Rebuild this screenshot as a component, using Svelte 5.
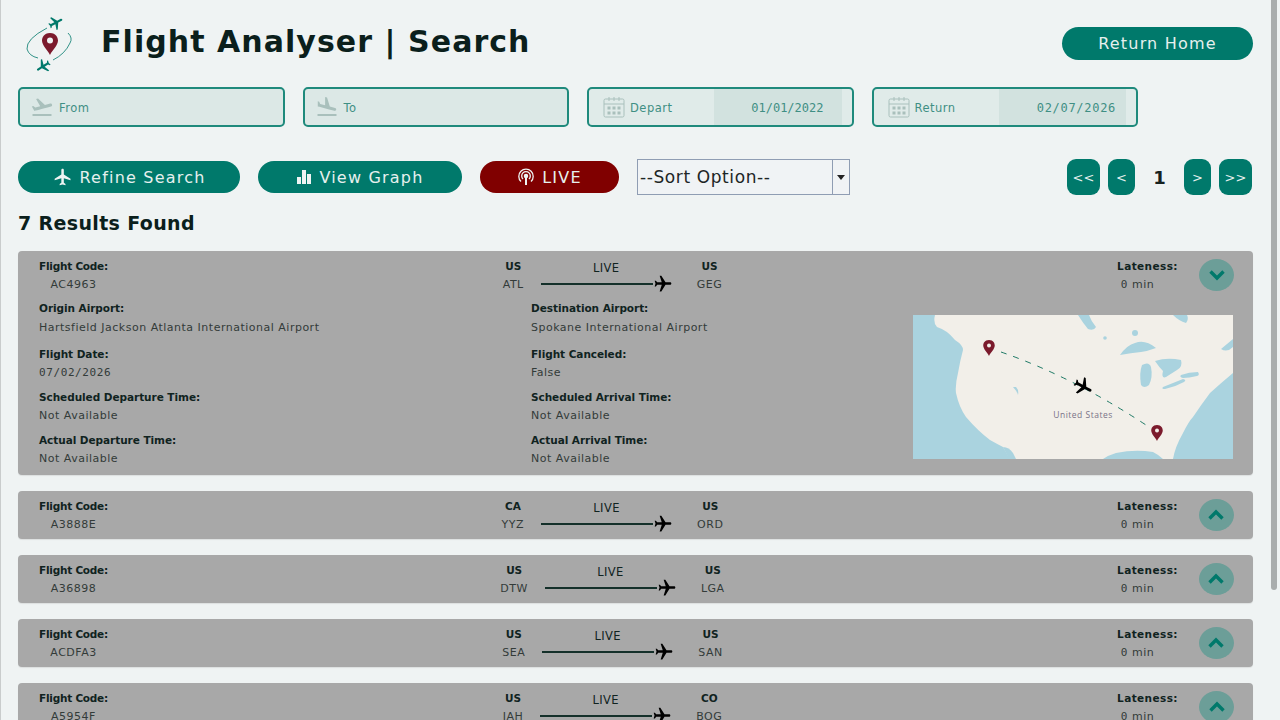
<script>
	const results = [
		{ code: 'AC4963', fromCountry: 'US', from: 'ATL', toCountry: 'US', to: 'GEG' },
		{ code: 'A3888E', fromCountry: 'CA', from: 'YYZ', toCountry: 'US', to: 'ORD' },
		{ code: 'A36898', fromCountry: 'US', from: 'DTW', toCountry: 'US', to: 'LGA' },
		{ code: 'ACDFA3', fromCountry: 'US', from: 'SEA', toCountry: 'US', to: 'SAN' },
		{ code: 'A5954F', fromCountry: 'US', from: 'IAH', toCountry: 'CO', to: 'BOG' },
		{ code: 'A1B2C4', fromCountry: 'US', from: 'JFK', toCountry: 'US', to: 'LAX' },
		{ code: 'AD7710', fromCountry: 'US', from: 'ORD', toCountry: 'US', to: 'DEN' }
	];

	const planePath =
		'M21 16v-2l-8-5V3.5c0-.83-.67-1.5-1.5-1.5S10 2.67 10 3.5V9l-8 5v2l8-2.5V19l-2 1.5V22l3.5-1 3.5 1v-1.5L13 19v-5.5l8 2.5z';

	const pinPath = 'M0 -11C-6.2 -11 -8 -6.2 -8 -3.4C-8 1.5 -2.5 6 0 11C2.5 6 8 1.5 8 -3.4C8 -6.2 6.2 -11 0 -11Z';

	let openIndex = $state(0);

	const leftDetails = [
		{ label: 'Origin Airport:', value: 'Hartsfield Jackson Atlanta International Airport' },
		{ label: 'Flight Date:', value: '07/02/2026', num: true },
		{ label: 'Scheduled Departure Time:', value: 'Not Available' },
		{ label: 'Actual Departure Time:', value: 'Not Available' }
	];
	const rightDetails = [
		{ label: 'Destination Airport:', value: 'Spokane International Airport' },
		{ label: 'Flight Canceled:', value: 'False' },
		{ label: 'Scheduled Arrival Time:', value: 'Not Available' },
		{ label: 'Actual Arrival Time:', value: 'Not Available' }
	];
</script>

{#snippet calendar()}
	<svg class="field-icon" width="22" height="22" viewBox="0 0 22 22" aria-hidden="true">
		<rect x="1" y="3" width="20" height="18" rx="1.5" fill="none" stroke="#a9c0bc" stroke-width="1" />
		<path d="M1 8h20M6 1v4M16 1v4M11 1v4" stroke="#a9c0bc" stroke-width="1" fill="none" />
		<g fill="#a9c0bc">
			<rect x="4.5" y="10.5" width="3" height="3" /><rect x="9.5" y="10.5" width="3" height="3" /><rect x="14.5" y="10.5" width="3" height="3" />
			<rect x="4.5" y="15.5" width="3" height="3" /><rect x="9.5" y="15.5" width="3" height="3" /><rect x="14.5" y="15.5" width="3" height="3" />
		</g>
	</svg>
{/snippet}

{#snippet group(item)}
	<div class="group">
		<div class="label">{item.label}</div>
		<div class="value" class:num={item.num}>{item.value}</div>
	</div>
{/snippet}

<div class="page">
	<header class="header">
		<svg class="logo" width="60" height="64" viewBox="0 0 60 64" aria-hidden="true">
			<path d="M27 16Q6 27 7 37Q9 44 18 46" fill="none" stroke="#00796b" stroke-width=".8" />
			<path d="M48 21Q53 26 50 31Q45 42 33 48" fill="none" stroke="#00796b" stroke-width=".8" />
			<g transform="translate(36 11) rotate(62) scale(.72) translate(-12 -12)"><path d={planePath} fill="#00796b" /></g>
			<g transform="translate(23 54) rotate(238) scale(.72) translate(-12 -12)"><path d={planePath} fill="#00796b" /></g>
			<path transform="translate(30 32)" d={pinPath} fill="#7b1a2c" />
			<circle cx="30" cy="28.5" r="3" fill="#eff3f3" />
		</svg>
		<h1>Flight Analyser | Search</h1>
		<button class="btn home" type="button">Return Home</button>
	</header>

	<div class="fields">
		<div class="field">
			<svg class="field-icon" width="24" height="24" viewBox="0 0 24 24" aria-hidden="true"><path fill="#a9c0bc" d="M2.5 19h19v2h-19v-2zm19.57-9.36c-.21-.8-1.04-1.28-1.84-1.06L14.92 10l-6.9-6.43-1.93.51 4.14 7.17-4.97 1.33-1.97-1.54-1.45.39 2.59 4.49s7.12-1.9 16.57-4.43c.81-.23 1.28-1.05 1.07-1.85z" /></svg>
			<span class="field-name">From</span>
		</div>
		<div class="field">
			<svg class="field-icon" width="24" height="24" viewBox="0 0 24 24" aria-hidden="true"><path fill="#a9c0bc" d="M2.5 19h19v2h-19v-2zm7.18-5.73l4.35 1.16 5.31 1.42c.8.21 1.62-.26 1.84-1.06.21-.8-.26-1.62-1.06-1.84l-5.31-1.42-2.76-9.02L10.12 2v8.28L5.15 8.95l-.93-2.32-1.45-.39v5.17l1.6.43 5.31 1.43z" /></svg>
			<span class="field-name">To</span>
		</div>
		<div class="field date">
			{@render calendar()}
			<span class="field-name">Depart</span>
			<span class="date-value num">01/01/2022</span>
		</div>
		<div class="field date">
			{@render calendar()}
			<span class="field-name">Return</span>
			<span class="date-value num spaced">02/07/2026</span>
		</div>
	</div>

	<div class="toolbar">
		<button class="btn refine" type="button">
			<svg width="20" height="20" viewBox="0 0 24 24" aria-hidden="true"><path fill="#eef4f3" d={planePath} /></svg>
			Refine Search
		</button>
		<button class="btn graph" type="button">
			<svg width="16" height="16" viewBox="0 0 16 16" aria-hidden="true"><path fill="#eef4f3" d="M1 8h4v7H1zM6 1h4v14H6zM11 5h4v10h-4z" /></svg>
			View Graph
		</button>
		<button class="btn live" type="button">
			<svg width="18" height="18" viewBox="0 0 18 18" fill="none" stroke="#eef4f3" stroke-width="1.3" aria-hidden="true">
				<path d="M4 13.5A7.2 7.2 0 1 1 14 13.5" />
				<path d="M6 11A4.3 4.3 0 1 1 12 11" />
				<circle cx="9" cy="8" r="1.6" fill="#eef4f3" />
				<path d="M9 10v7" stroke-width="2" />
			</svg>
			LIVE
		</button>
		<div class="sort">
			<span class="sort-text">--Sort Option--</span>
			<span class="sort-arrow"></span>
		</div>
		<nav class="pager">
			<button class="page-btn wide" type="button">&lt;&lt;</button>
			<button class="page-btn" type="button">&lt;</button>
			<span class="page-no">1</span>
			<button class="page-btn" type="button">&gt;</button>
			<button class="page-btn wide" type="button">&gt;&gt;</button>
		</nav>
	</div>

	<h2>7 Results Found</h2>

	{#each results as r, i}
		<section class="card">
			<div class="summary">
				<div class="code">
					<div class="label">Flight Code:</div>
					<div class="value">{r.code}</div>
				</div>
				<div class="route">
					<div class="place">
						<div class="label">{r.fromCountry}</div>
						<div class="value">{r.from}</div>
					</div>
					<div class="track">
						<div class="live-tag">LIVE</div>
						<div class="line">
							<span class="rule"></span>
							<svg class="plane" width="20" height="20" viewBox="0 0 24 24" aria-hidden="true"><path d={planePath} fill="#000" /></svg>
						</div>
					</div>
					<div class="place">
						<div class="label">{r.toCountry}</div>
						<div class="value">{r.to}</div>
					</div>
				</div>
				<div class="late">
					<div class="late-text">
						<div class="label">Lateness:</div>
						<div class="value mins"><span class="num">0</span> min</div>
					</div>
					<button class="toggle" type="button" aria-label="Toggle details" onclick={() => (openIndex = openIndex === i ? -1 : i)}>
						<svg width="18" height="12" viewBox="0 0 18 12" fill="none" stroke="#00796b" stroke-width="3.4" aria-hidden="true">
							{#if openIndex === i}
								<path d="M2.5 2.5L9 9L15.5 2.5" />
							{:else}
								<path d="M2.5 9.5L9 3L15.5 9.5" />
							{/if}
						</svg>
					</button>
				</div>
			</div>

			{#if openIndex === i}
				<div class="details">
					<div class="col">
						{#each leftDetails as item}{@render group(item)}{/each}
					</div>
					<div class="col">
						{#each rightDetails as item}{@render group(item)}{/each}
					</div>
					<svg class="map" width="320" height="144" viewBox="0 0 320 144" aria-label="Route map">
						<rect width="320" height="144" fill="#aad3df" />
						<path fill="#f2efe9" d="M22 0Q20 8 24 12Q34 15 42 25Q50 30 50 35Q47 46 45 58Q42 70 43 78Q46 92 53 102Q65 116 77 125Q86 130 90 132L97 144L190 144Q196 140 203 138Q222 134 240 137Q246 140 250 144L260 144Q262 132 270 118Q276 106 280 102Q288 90 297 78Q308 68 320 58L320 32Q314 38 308 34L320 24L320 0Z" />
						<g fill="#aad3df">
							<path d="M207 40Q214 30 222 28Q232 24 243 33Q235 36 228 37Q218 38 207 40Z" />
							<path d="M229 50Q236 46 238 52Q240 62 236 70Q231 74 228 70Q226 58 229 50Z" />
							<path d="M242 46Q254 42 268 45Q270 52 264 55L253 62Q248 64 250 56Q246 52 242 46Z" />
							<path d="M250 72Q260 68 270 64Q274 65 271 67Q262 72 252 74Q248 74 250 72Z" />
							<path d="M268 60Q276 57 285 57Q287 60 284 61Q276 63 270 63Q266 62 268 60Z" />
							<path d="M165 0Q170 8 175 14Q181 16 183 12Q178 6 176 0Z" />
							<path d="M260 0Q266 6 273 8Q276 4 274 0Z" />
							<circle cx="222" cy="18" r="3" />
							<circle cx="192" cy="23" r="1.8" />
							<path d="M100 72Q104 76 105 80Q106 75 103 72Z" />
							<path d="M90 132Q96 132 100 138L103 144L96 144Z" />
						</g>
						<path d="M88 37Q160 62 233 110" fill="none" stroke="#1f7a66" stroke-width="1" stroke-dasharray="6 7" />
						<path transform="translate(76 33) scale(.72)" d={pinPath} fill="#7b1a2c" />
						<circle cx="76" cy="30.5" r="2" fill="#f2efe9" />
						<path transform="translate(244 118) scale(.72)" d={pinPath} fill="#7b1a2c" />
						<circle cx="244" cy="115.5" r="2" fill="#f2efe9" />
						<g transform="translate(170 72) rotate(118) scale(.92) translate(-12 -12)"><path d={planePath} fill="#000" /></g>
						<text x="170" y="103" class="map-label" text-anchor="middle">United States</text>
					</svg>
				</div>
			{/if}
		</section>
	{/each}

	<div class="scroll-thumb"></div>
</div>

<style>
	:global(body) {
		margin: 0;
		overflow: hidden;
	}

	.page {
		box-sizing: border-box;
		position: relative;
		height: 100vh;
		overflow: hidden;
		padding: 0 27px 19px 17px;
		background: #eff3f3;
		border-left: 1px solid #c9cccc;
		font-family: 'DejaVu Sans', sans-serif;
		color: #0d1f1c;
	}

	.scroll-thumb {
		position: absolute;
		top: 0;
		right: 3px;
		width: 6px;
		height: 590px;
		background: #a9adad;
		border-radius: 0 0 3px 3px;
	}

	.num {
		font-family: 'DejaVu Sans Mono', monospace;
	}

	.header {
		display: flex;
		align-items: center;
		height: 87px;
		padding-left: 2px;
	}

	.logo {
		flex: none;
		margin-right: 21px;
		margin-top: 1px;
	}

	h1 {
		margin: 0 0 5px;
		font-size: 30px;
		font-weight: 700;
		letter-spacing: 1.05px;
		color: #0b1f1c;
	}

	.btn {
		display: flex;
		align-items: center;
		justify-content: center;
		gap: 7px;
		height: 32px;
		padding: 0;
		border: none;
		border-radius: 17px;
		background: #00796b;
		color: #e6f0ee;
		font-family: inherit;
		font-size: 16px;
		letter-spacing: 1.2px;
	}

	.home {
		margin-left: auto;
		width: 191px;
		height: 33px;
	}

	.fields {
		display: flex;
		gap: 18px;
	}

	.field {
		box-sizing: border-box;
		position: relative;
		display: flex;
		align-items: center;
		width: 266.5px;
		height: 40px;
		padding-left: 10px;
		background: #dce8e6;
		border: 2px solid #1f8a7c;
		border-radius: 5px;
	}

	.field-icon {
		flex: none;
		margin-right: 5px;
	}

	.field-name {
		padding-top: 2px;
		font-size: 11.5px;
		letter-spacing: 0.5px;
		color: #3f8f84;
	}

	.field.date {
		background: #e0ebe9;
		padding-left: 14px;
	}

	.date-value {
		display: flex;
		align-items: center;
		justify-content: flex-end;
		box-sizing: border-box;
		position: absolute;
		left: 125px;
		right: 10px;
		top: 0;
		bottom: 0;
		padding-top: 1px;
		padding-right: 18px;
		background: #d2e2df;
		font-size: 12px;
		color: #3f8f84;
	}

	.date-value.spaced {
		padding-right: 10px;
		letter-spacing: 0.7px;
	}

	.toolbar {
		display: flex;
		align-items: center;
		margin-top: 32px;
		height: 36px;
	}

	.refine {
		width: 222px;
		margin-right: 18px;
	}

	.graph {
		width: 204px;
		margin-right: 18px;
	}

	.live {
		width: 139px;
		margin-right: 18px;
		background: #800000;
	}

	.sort {
		box-sizing: border-box;
		display: flex;
		align-items: stretch;
		width: 213px;
		height: 36px;
		background: #f0f3f5;
		border: 1px solid #8f9db3;
	}

	.sort-text {
		flex: 1;
		padding-left: 2px;
		font-size: 17px;
		letter-spacing: 0.6px;
		line-height: 34px;
		color: #1d2626;
		border-right: 1px solid #8f9db3;
	}

	.sort-arrow {
		position: relative;
		width: 16px;
	}

	.sort-arrow::after {
		content: '';
		position: absolute;
		left: 4px;
		top: 15px;
		border: 4px solid transparent;
		border-top: 5px solid #222;
		border-bottom: none;
	}

	.pager {
		display: flex;
		align-items: center;
		margin-left: auto;
		margin-right: 1px;
	}

	.page-btn {
		width: 27px;
		height: 36px;
		padding: 0;
		border: none;
		border-radius: 9px;
		background: #00796b;
		color: #e6f0ee;
		font-family: inherit;
		font-size: 13px;
	}

	.page-btn.wide {
		width: 33px;
	}

	.page-btn.wide:first-child {
		margin-right: 8px;
	}

	.page-btn.wide:last-child {
		margin-left: 8px;
	}

	.page-no {
		width: 49px;
		text-align: center;
		font-size: 18px;
		font-weight: 700;
		color: #16211f;
	}

	h2 {
		margin: 17px 0 17px;
		font-size: 19px;
		line-height: 22px;
		letter-spacing: 0.35px;
		font-weight: 700;
		color: #0b1f1c;
	}

	.card {
		margin-bottom: 16px;
		padding: 0 19px 0 21px;
		background: #a8a8a8;
		border-radius: 4px;
		box-shadow: 0 1px 1px rgba(0, 0, 0, 0.08);
	}

	.summary {
		display: flex;
		justify-content: space-between;
		height: 48px;
	}

	.label {
		font-size: 10.5px;
		line-height: 18px;
		font-weight: 700;
		letter-spacing: -0.05px;
		white-space: nowrap;
		color: #10231f;
	}

	.value {
		font-size: 11px;
		line-height: 19px;
		letter-spacing: 0.5px;
		white-space: nowrap;
		color: #333b39;
	}

	.value.num {
		letter-spacing: 0.6px;
	}

	.code,
	.place,
	.late-text {
		padding-top: 6px;
		text-align: center;
	}

	.code {
		width: 69px;
	}

	.code .label {
		letter-spacing: -0.25px;
	}

	.late-text {
		width: 61px;
	}

	.late-text .label {
		letter-spacing: 0.4px;
	}

	.mins {
		padding-right: 20px;
	}

	.route {
		display: flex;
		gap: 17px;
	}

	.track {
		width: 131px;
		margin-right: 8px;
		padding-top: 8px;
	}

	.live-tag {
		font-size: 11.5px;
		letter-spacing: 0.4px;
		line-height: 18px;
		text-align: center;
		color: #10231f;
	}

	.line {
		display: flex;
		align-items: center;
		height: 18px;
		margin-top: -2px;
	}

	.rule {
		flex: none;
		width: 112px;
		height: 2px;
		background: #14302a;
	}

	.plane {
		flex: none;
		transform: rotate(90deg);
	}

	.late {
		display: flex;
		gap: 21px;
	}

	.toggle {
		display: flex;
		align-items: center;
		justify-content: center;
		width: 35px;
		height: 32px;
		margin-top: 8px;
		padding: 0;
		border: none;
		border-radius: 50%;
		background: #6c9e98;
	}

	.details {
		display: grid;
		grid-template-columns: 492px 382px 320px;
		padding-bottom: 7px;
	}

	.group + .group {
		padding-top: 6px;
	}

	.col .group:first-child .value {
		margin-top: 1px;
		margin-bottom: 2px;
	}

	.map {
		display: block;
		margin-top: 16px;
	}

	.map-label {
		font-family: 'Open Sans', sans-serif;
		font-size: 8.5px;
		letter-spacing: 0.5px;
		fill: #7a7287;
	}
</style>
